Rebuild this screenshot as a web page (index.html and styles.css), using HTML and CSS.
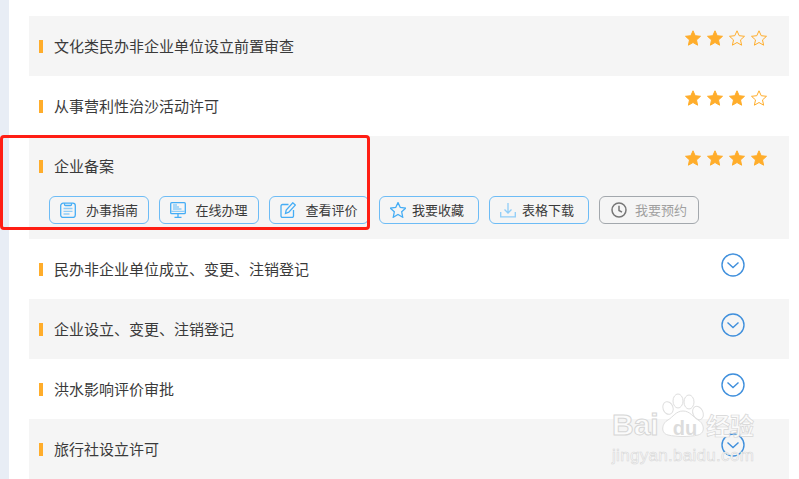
FILE: index.html
```html
<!DOCTYPE html>
<html lang="zh-CN">
<head>
    <meta charset="UTF-8">
    <meta name="viewport" content="width=device-width, initial-scale=1.0">
    <title>办事事项</title>
    <link rel="stylesheet" href="styles.css">
</head>
<body>
    <svg class="sprite" width="0" height="0">
        <symbol id="star" viewBox="0 0 16 16">
            <path d="M8 .8l2.200 4.900 5.300.6-4 3.600 1.100 5.300L8 12.500l-4.600 2.700 1.100-5.300-4-3.600 5.300-.6z"/>
        </symbol>
        <symbol id="down" viewBox="0 0 24 24">
            <circle cx="12" cy="12" r="11"/>
            <path d="M6.500 9.500l5.500 5 5.500-5"/>
        </symbol>
    </svg>

    <div class="side-strip"></div>

    <div class="item-list">
        <div class="item">
            <div class="item-head">
                <span class="item-title">文化类民办非企业单位设立前置审查</span>
                <div class="stars">
                    <svg class="star"><use href="#star"/></svg>
                    <svg class="star"><use href="#star"/></svg>
                    <svg class="star empty"><use href="#star"/></svg>
                    <svg class="star empty"><use href="#star"/></svg>
                </div>
            </div>
        </div>

        <div class="item">
            <div class="item-head">
                <span class="item-title">从事营利性治沙活动许可</span>
                <div class="stars">
                    <svg class="star"><use href="#star"/></svg>
                    <svg class="star"><use href="#star"/></svg>
                    <svg class="star"><use href="#star"/></svg>
                    <svg class="star empty"><use href="#star"/></svg>
                </div>
            </div>
        </div>

        <div class="item">
            <div class="item-head">
                <span class="item-title">企业备案</span>
                <div class="stars">
                    <svg class="star"><use href="#star"/></svg>
                    <svg class="star"><use href="#star"/></svg>
                    <svg class="star"><use href="#star"/></svg>
                    <svg class="star"><use href="#star"/></svg>
                </div>
            </div>
            <div class="actions">
                <a class="btn">
                    <svg class="btn-icon" viewBox="0 0 16 16">
                        <rect x=".7" y="1.200" width="14.600" height="14.300" rx="2.500"/>
                        <path d="M4.500 1.200v1.300a1 1 0 0 0 1 1h5a1 1 0 0 0 1-1V1.200"/>
                        <path class="fill-lines" d="M3.500 6.500h9M3.500 9.300h9M3.500 12h6"/>
                    </svg>
                    办事指南
                </a>
                <a class="btn btn-mid">
                    <svg class="btn-icon" viewBox="0 0 16 16">
                        <rect x=".7" y=".7" width="14.600" height="11" rx="1"/>
                        <path class="fill-lines" d="M3 3h4M3 5h6M3 7h8.500M1 9.300h14"/>
                        <path d="M8 11.700v3.300M4.500 15.300h7"/>
                    </svg>
                    在线办理
                </a>
                <a class="btn btn-mid">
                    <svg class="btn-icon" viewBox="0 0 16 16">
                        <path d="M8.500 2.500H2.500A1.500 1.500 0 0 0 1 4v10a1.500 1.500 0 0 0 1.500 1.500H12a1.500 1.500 0 0 0 1.500-1.500V8"/>
                        <path d="M5.500 11.500l.7-3.500L12.800.8l2.500 2.300L8.800 10.200z"/>
                    </svg>
                    查看评价
                </a>
                <a class="btn btn-tight">
                    <svg class="btn-icon" viewBox="0 0 16 16">
                        <path d="M8 .6l2.300 4.900 5.300.7-3.900 3.600 1 5.400L8 12.500l-4.700 2.700 1-5.400L.4 6.200l5.300-.7z"/>
                    </svg>
                    我要收藏
                </a>
                <a class="btn btn-tight">
                    <svg class="btn-icon icon-light" viewBox="0 0 16 16">
                        <path d="M8 1v9.500M4.500 7.500L8 11l3.500-3.500M.7 10v4.800h14.600V10"/>
                    </svg>
                    表格下载
                </a>
                <a class="btn btn-off">
                    <svg class="btn-icon" viewBox="0 0 16 16">
                        <circle cx="8" cy="8" r="7"/>
                        <path d="M8 3.800V8.500l3 1.700"/>
                    </svg>
                    我要预约
                </a>
            </div>
        </div>

        <div class="item">
            <div class="item-head">
                <span class="item-title">民办非企业单位成立、变更、注销登记</span>
                <svg class="toggle"><use href="#down"/></svg>
            </div>
        </div>

        <div class="item">
            <div class="item-head">
                <span class="item-title">企业设立、变更、注销登记</span>
                <svg class="toggle"><use href="#down"/></svg>
            </div>
        </div>

        <div class="item">
            <div class="item-head">
                <span class="item-title">洪水影响评价审批</span>
                <svg class="toggle"><use href="#down"/></svg>
            </div>
        </div>

        <div class="item">
            <div class="item-head">
                <span class="item-title">旅行社设立许可</span>
                <svg class="toggle"><use href="#down"/></svg>
            </div>
        </div>
    </div>

    <!-- 截图上的标注框和水印 -->
    <div class="red-box"></div>

    <div class="watermark">
        <svg class="paw" viewBox="0 0 45 45">
            <ellipse cx="8" cy="15" rx="5" ry="6.500" transform="rotate(-20 8 15)"/>
            <ellipse cx="18" cy="8" rx="5" ry="7"/>
            <ellipse cx="29" cy="9" rx="5" ry="7"/>
            <ellipse cx="38" cy="20" rx="5" ry="7" transform="rotate(-25 38 20)"/>
            <path d="M8 42c-8-2-6-12 0-15 5-3 8-9 15-9s10 6 15 9c6 3 8 13 0 15-9 2-21 2-30 0z"/>
        </svg>
        <div class="wm-logo"><span>Bai</span><span class="wm-du">du</span><span class="wm-cn">经验</span></div>
        <div class="wm-url">jingyan.baidu.com</div>
    </div>
</body>
</html>
```

FILE: styles.css
```css
* {
    box-sizing: border-box;
    margin: 0;
    padding: 0;
}

html, body {
    height: 479px;
    overflow: hidden;
}

body {
    display: flex;
    position: relative;
    background-color: #fff;
    color: #3a3a3a;
    font-family: "Noto Sans CJK SC", "Liberation Sans", sans-serif;
}

.sprite {
    position: absolute;
}

.side-strip {
    width: 9px;
    background-color: #e8edf5;
}

.item-list {
    width: 760px;
    margin-left: 20px;
    padding-top: 16px;
}

.item:nth-child(odd) {
    background-color: #f5f5f5;
}

.item-head {
    display: flex;
    justify-content: space-between;
    align-items: flex-start;
    height: 60px;
    padding: 0 22px 0 10px;
}

.item-title {
    display: flex;
    align-items: center;
    gap: 11px;
    height: 60px;
    padding-bottom: 2px;
    font-size: 15px;
}

.item-title::before {
    content: "";
    width: 4px;
    height: 13px;
    margin-top: 2px;
    background-color: #ffad2b;
}

.stars {
    display: flex;
    gap: 6px;
    margin-top: 14px;
}

.star {
    width: 16px;
    height: 16px;
    fill: #ffad2b;
    stroke: #ffad2b;
    stroke-width: 1;
}

.star.empty {
    fill: none;
}

.toggle {
    width: 24px;
    height: 24px;
    margin: 14px 22px 0 0;
    fill: none;
    stroke: #3f8fdc;
    stroke-width: 1.400;
}

.actions {
    display: flex;
    gap: 10px;
    padding: 0 0 15px 20px;
}

.btn {
    display: flex;
    align-items: center;
    justify-content: center;
    gap: 10px;
    width: 100px;
    height: 28px;
    padding-bottom: 2px;
    border: 1px solid #6dbcf6;
    border-radius: 6px;
    font-size: 13px;
    white-space: nowrap;
}

.btn-mid {
    gap: 9px;
}

.btn-tight {
    gap: 6px;
    padding-right: 4px;
}

.btn-icon {
    width: 16px;
    height: 16px;
    margin-top: 2px;
    fill: none;
    stroke: #45adf5;
    stroke-width: 1.300;
}

.btn-icon .fill-lines {
    stroke: #8fcdf8;
    stroke-width: 1.300;
}

.btn-icon.icon-light {
    stroke: #8fcdf8;
}

.btn-off {
    gap: 8px;
    border-color: #a3a8ad;
    color: #a0a0a0;
}

.btn-off .btn-icon {
    stroke: #777;
    stroke-width: 1.500;
}

.red-box {
    position: absolute;
    left: 0;
    top: 135px;
    width: 370px;
    height: 95px;
    border: 3px solid #ff1e14;
    border-radius: 4px;
}

.watermark {
    position: absolute;
    left: 612px;
    top: 393px;
    width: 150px;
}

.paw {
    position: absolute;
    left: 48px;
    top: 0;
    width: 45px;
    height: 45px;
    fill: #fff;
    stroke: #dedede;
    stroke-width: 1;
}

.wm-logo {
    position: relative;
    display: flex;
    align-items: baseline;
    height: 44px;
    padding-top: 15px;
    color: #fbfbfb;
    font-family: "Liberation Sans", sans-serif;
    font-size: 30px;
    font-weight: bold;
    line-height: 34px;
    -webkit-text-stroke: 1px #d6d6d6;
}

.wm-du {
    margin-left: 14px;
    color: #dcdcdc;
    font-size: 20px;
    -webkit-text-stroke: 0;
}

.wm-cn {
    margin-left: 9px;
    font-family: "Noto Sans CJK SC", sans-serif;
    font-size: 24px;
    -webkit-text-stroke: .7px #d6d6d6;
}

.wm-url {
    position: relative;
    margin-top: 9px;
    color: #fbfbfb;
    font-family: "Liberation Sans", sans-serif;
    font-size: 17px;
    line-height: 20px;
    letter-spacing: .3px;
    -webkit-text-stroke: .6px #d8d8d8;
}
```
